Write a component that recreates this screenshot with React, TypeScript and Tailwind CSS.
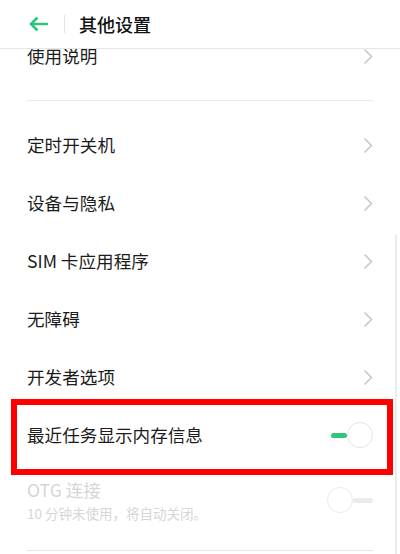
import React from 'react'

const font = { fontFamily: '"Noto Sans CJK SC", "Noto Sans", sans-serif' }

const Chevron: React.FC = () => (
  <svg width="10" height="17" viewBox="0 0 10 17" fill="none">
    <path d="M1.5 1.5L8.5 8.5L1.5 15.5" stroke="#c8c8c8" strokeWidth="1.6" />
  </svg>
)

const Row: React.FC<{ label: string }> = ({ label }) => (
  <div className="h-[58px] flex items-center justify-between pl-[27px] pr-[27px]">
    <span className="text-[17.6px] text-[#1c1c1c]">{label}</span>
    <Chevron />
  </div>
)

const App: React.FC = () => {
  return (
    <div className="relative w-[400px] h-[554px] bg-white overflow-hidden" style={font}>
      <div className="relative z-10 h-[49px] bg-white border-b border-[#e6e6e6] flex items-center">
        <svg className="ml-[29px]" width="20" height="16" viewBox="0 0 20 16" fill="none">
          <path d="M19 8H2M8.5 1.5L2 8L8.5 14.5" stroke="#2fc57a" strokeWidth="2.6" />
        </svg>
        <div className="ml-[15px] w-px h-[18px] bg-[#e2e2e2]" />
        <span className="ml-[14px] text-[18px] font-medium text-[#111]">其他设置</span>
      </div>

      <div className="-mt-[22px]">
        <Row label="使用说明" />
        <div className="my-[15px] mx-[27px] h-px bg-[#ebebeb]" />
        <Row label="定时开关机" />
        <Row label="设备与隐私" />
        <Row label="SIM 卡应用程序" />
        <Row label="无障碍" />
        <Row label="开发者选项" />
        <div className="h-[58px] flex items-center justify-between pl-[27px] pr-[27px]">
          <span className="text-[17.6px] text-[#1c1c1c]">最近任务显示内存信息</span>
          <div className="flex items-center">
            <div className="w-[16px] h-[5px] rounded-full bg-[#2fc57a]" />
            <div className="w-[26px] h-[26px] rounded-full border border-[#e4e4e4] bg-white" />
          </div>
        </div>
        <div className="h-[72px] flex items-center justify-between pl-[27px] pr-[27px]">
          <div className="flex flex-col">
            <span className="text-[17.6px] text-[#d6d6d6] leading-[24px]">OTG 连接</span>
            <span className="text-[13.5px] text-[#d6d6d6] leading-[20px] mt-[1px]">10 分钟未使用，将自动关闭。</span>
          </div>
          <div className="flex items-center">
            <div className="w-[26px] h-[26px] rounded-full border border-[#ececec] bg-white" />
            <div className="w-[20px] h-[5px] rounded-full bg-[#ebebeb]" />
          </div>
        </div>
        <div className="mt-[14px] mx-[27px] h-px bg-[#e6e6e6]" />
      </div>

      <div className="absolute right-[3px] top-[234px] w-[2px] h-[320px] bg-[#ececec]" />
      <div className="absolute left-[11px] top-[399px] w-[382px] h-[76px] border-[6px] border-[#ff0000]" />
    </div>
  )
}

export default App
